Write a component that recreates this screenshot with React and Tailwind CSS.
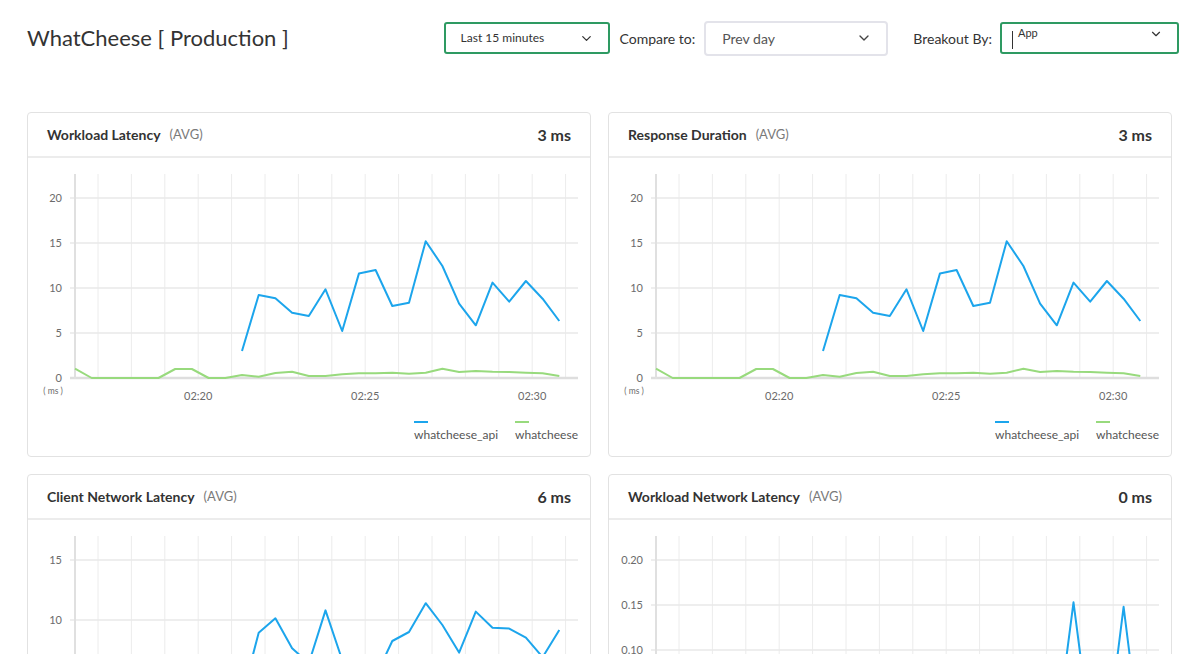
import { ChevronDown } from 'lucide-react';

// data points every 30s, 02:15:20 .. 02:29:50
const N = 30;
const pad = (arr) => [...Array(N - arr.length).fill(null), ...arr];

const latencyApi = pad([3.0, 9.22, 8.85, 7.26, 6.89, 9.85, 5.22, 11.6, 12.0, 8.0, 8.37, 15.2, 12.44, 8.26, 5.85, 10.6, 8.48, 10.78, 8.81, 6.33]);
const latencyWeb = [1.03, 0, 0, 0, 0, 0, 1, 1, 0, 0, 0.33, 0.15, 0.55, 0.7, 0.22, 0.22, 0.41, 0.52, 0.52, 0.59, 0.48, 0.59, 1.03, 0.67, 0.78, 0.7, 0.67, 0.59, 0.52, 0.22];

const clientApi = pad([3.6, 8.94, 10.14, 7.64, 6.4, 10.8, 6.67, 4.5, 5.3, 8.25, 9.0, 11.4, 9.58, 7.28, 10.7, 9.36, 9.28, 8.53, 6.9, 9.17]);
const clientWeb = [0.8, 0, 0, 0, 0, 0, 0.9, 0.9, 0, 0, 0.3, 0.2, 0.5, 0.6, 0.2, 0.2, 0.4, 0.5, 0.5, 0.5, 0.4, 0.5, 0.9, 0.6, 0.7, 0.6, 0.6, 0.5, 0.5, 0.2];

const netApi = pad([0, 0, 0, 0, 0, 0, 0, 0, 0, 0, 0, 0, 0, 0, 0.01, 0.153, 0.01, 0, 0.148, 0]);
const netWeb = Array(N).fill(0);

const BLUE = '#1ca5ec';
const GREEN = '#98da7d';

const GRID_X = Array.from({ length: 15 }, (_, k) => 70 + k * 33.4);
const X_LABELS = [
  { k: 3, text: '02:20' },
  { k: 8, text: '02:25' },
  { k: 13, text: '02:30' },
];

function linePath(values, x, y) {
  let d = '';
  let pen = false;
  values.forEach((v, i) => {
    if (v === null) {
      pen = false;
      return;
    }
    d += `${pen ? 'L' : 'M'}${x(i).toFixed(1)} ${y(v).toFixed(1)} `;
    pen = true;
  });
  return d;
}

function Chart({ ticks, fmt, api, web }) {
  const top = ticks[ticks.length - 1];
  const y = (v) => 220 - (v / top) * 180;
  const x = (i) => 47 + i * 16.7;

  return (
    <div>
      <svg width="562" height="256" className="block">
        {GRID_X.map((gx) => (
          <line key={gx} x1={gx} x2={gx} y1={16} y2={220} stroke="#ececec" strokeWidth="1" />
        ))}
        {ticks.map((t) => (
          <g key={t}>
            <line
              x1={42}
              x2={550}
              y1={y(t)}
              y2={y(t)}
              stroke={t === 0 ? '#dedede' : '#e9e9e9'}
              strokeWidth={t === 0 ? 2.5 : 1.5}
            />
            <text x={34} y={y(t) + 4} textAnchor="end" fontSize="11" fill="#6b6b6b">
              {fmt(t)}
            </text>
          </g>
        ))}
        <line x1={47} x2={47} y1={16} y2={221} stroke="#e0e0e0" strokeWidth="2" />
        <text x={25} y={236} textAnchor="middle" fontSize="8.5" fill="#6b6b6b">
          ( ms )
        </text>
        {X_LABELS.map((l) => (
          <text key={l.text} x={GRID_X[l.k]} y={242} textAnchor="middle" fontSize="11" fill="#6b6b6b">
            {l.text}
          </text>
        ))}
        <path d={linePath(web, x, y)} fill="none" stroke={GREEN} strokeWidth="2" strokeLinejoin="round" />
        <path d={linePath(api, x, y)} fill="none" stroke={BLUE} strokeWidth="2" strokeLinejoin="round" />
      </svg>

      {/* legend */}
      <div className="flex justify-end gap-[17px] pr-[12px] pt-[7px] pb-[14px]">
        {[
          { label: 'whatcheese_api', color: BLUE },
          { label: 'whatcheese', color: GREEN },
        ].map((s) => (
          <div key={s.label} className="flex flex-col items-start">
            <div className="w-[14px] h-[2px]" style={{ background: s.color }} />
            <span className="mt-[5px] text-[12px] leading-[14px] text-[#555]">{s.label}</span>
          </div>
        ))}
      </div>
    </div>
  );
}

function Card({ title, value, children }) {
  return (
    <div className="bg-white border border-[#e2e2e2] rounded-[4px] overflow-hidden">
      <div className="h-[45px] flex items-center justify-between px-[19px] border-b-2 border-[#ececec]">
        <div className="flex items-center gap-[9px]">
          <span className="font-bold text-[14px] text-[#333]">{title}</span>
          <span className="text-[13px] text-[#7a7a7a]">(AVG)</span>
        </div>
        <span className="font-bold text-[16px] text-[#333]">{value}</span>
      </div>
      {children}
    </div>
  );
}

const intFmt = (t) => String(t);
const decFmt = (t) => t.toFixed(2);

export default function App() {
  return (
    <div className="min-h-screen bg-white font-['Lato',sans-serif] text-[#333]">
      {/* top bar */}
      <div className="h-[76px] flex items-center justify-between pl-[27px] pr-[23px]">
        <h1 className="text-[22px] leading-none text-[#333]">WhatCheese [ Production ]</h1>

        <div className="flex items-center">
          <div className="w-[166px] h-[32px] border-2 border-[#2e9a62] rounded-[3px] pl-[15px] pr-[14px] flex items-center justify-between text-[12px] text-[#333]">
            <span>Last 15 minutes</span>
            <ChevronDown size={15} strokeWidth={2} />
          </div>
          <span className="ml-[10px] text-[14px] text-[#333]">Compare to:</span>
          <div className="ml-[9px] w-[184px] h-[35px] border-2 border-[#e3e3ea] rounded-[4px] pl-[16px] pr-[14px] flex items-center justify-between text-[14px] text-[#555]">
            <span>Prev day</span>
            <ChevronDown size={16} strokeWidth={2} className="text-[#444]" />
          </div>
          <span className="ml-[25px] text-[14px] text-[#333]">Breakout By:</span>
          <div className="ml-[8px] w-[179px] h-[32px] border-2 border-[#2e9a62] rounded-[3px] pl-[10px] pr-[14px] pt-[2px] flex items-start">
            <div className="w-px h-[18px] bg-[#333] mt-[5px]" />
            <span className="ml-[5px] text-[11px] leading-[13px] text-[#333]">App</span>
            <ChevronDown size={14} strokeWidth={2} className="ml-auto mt-[1px]" />
          </div>
        </div>
      </div>

      {/* charts grid */}
      <div className="mt-[36px] pl-[27px] pr-[30px] grid grid-cols-2 gap-[17px]">
        <Card title="Workload Latency" value="3 ms">
          <Chart ticks={[0, 5, 10, 15, 20]} fmt={intFmt} api={latencyApi} web={latencyWeb} />
        </Card>
        <Card title="Response Duration" value="3 ms">
          <Chart ticks={[0, 5, 10, 15, 20]} fmt={intFmt} api={latencyApi} web={latencyWeb} />
        </Card>
        <Card title="Client Network Latency" value="6 ms">
          <Chart ticks={[0, 5, 10, 15]} fmt={intFmt} api={clientApi} web={clientWeb} />
        </Card>
        <Card title="Workload Network Latency" value="0 ms">
          <Chart ticks={[0, 0.05, 0.1, 0.15, 0.2]} fmt={decFmt} api={netApi} web={netWeb} />
        </Card>
      </div>
    </div>
  );
}
